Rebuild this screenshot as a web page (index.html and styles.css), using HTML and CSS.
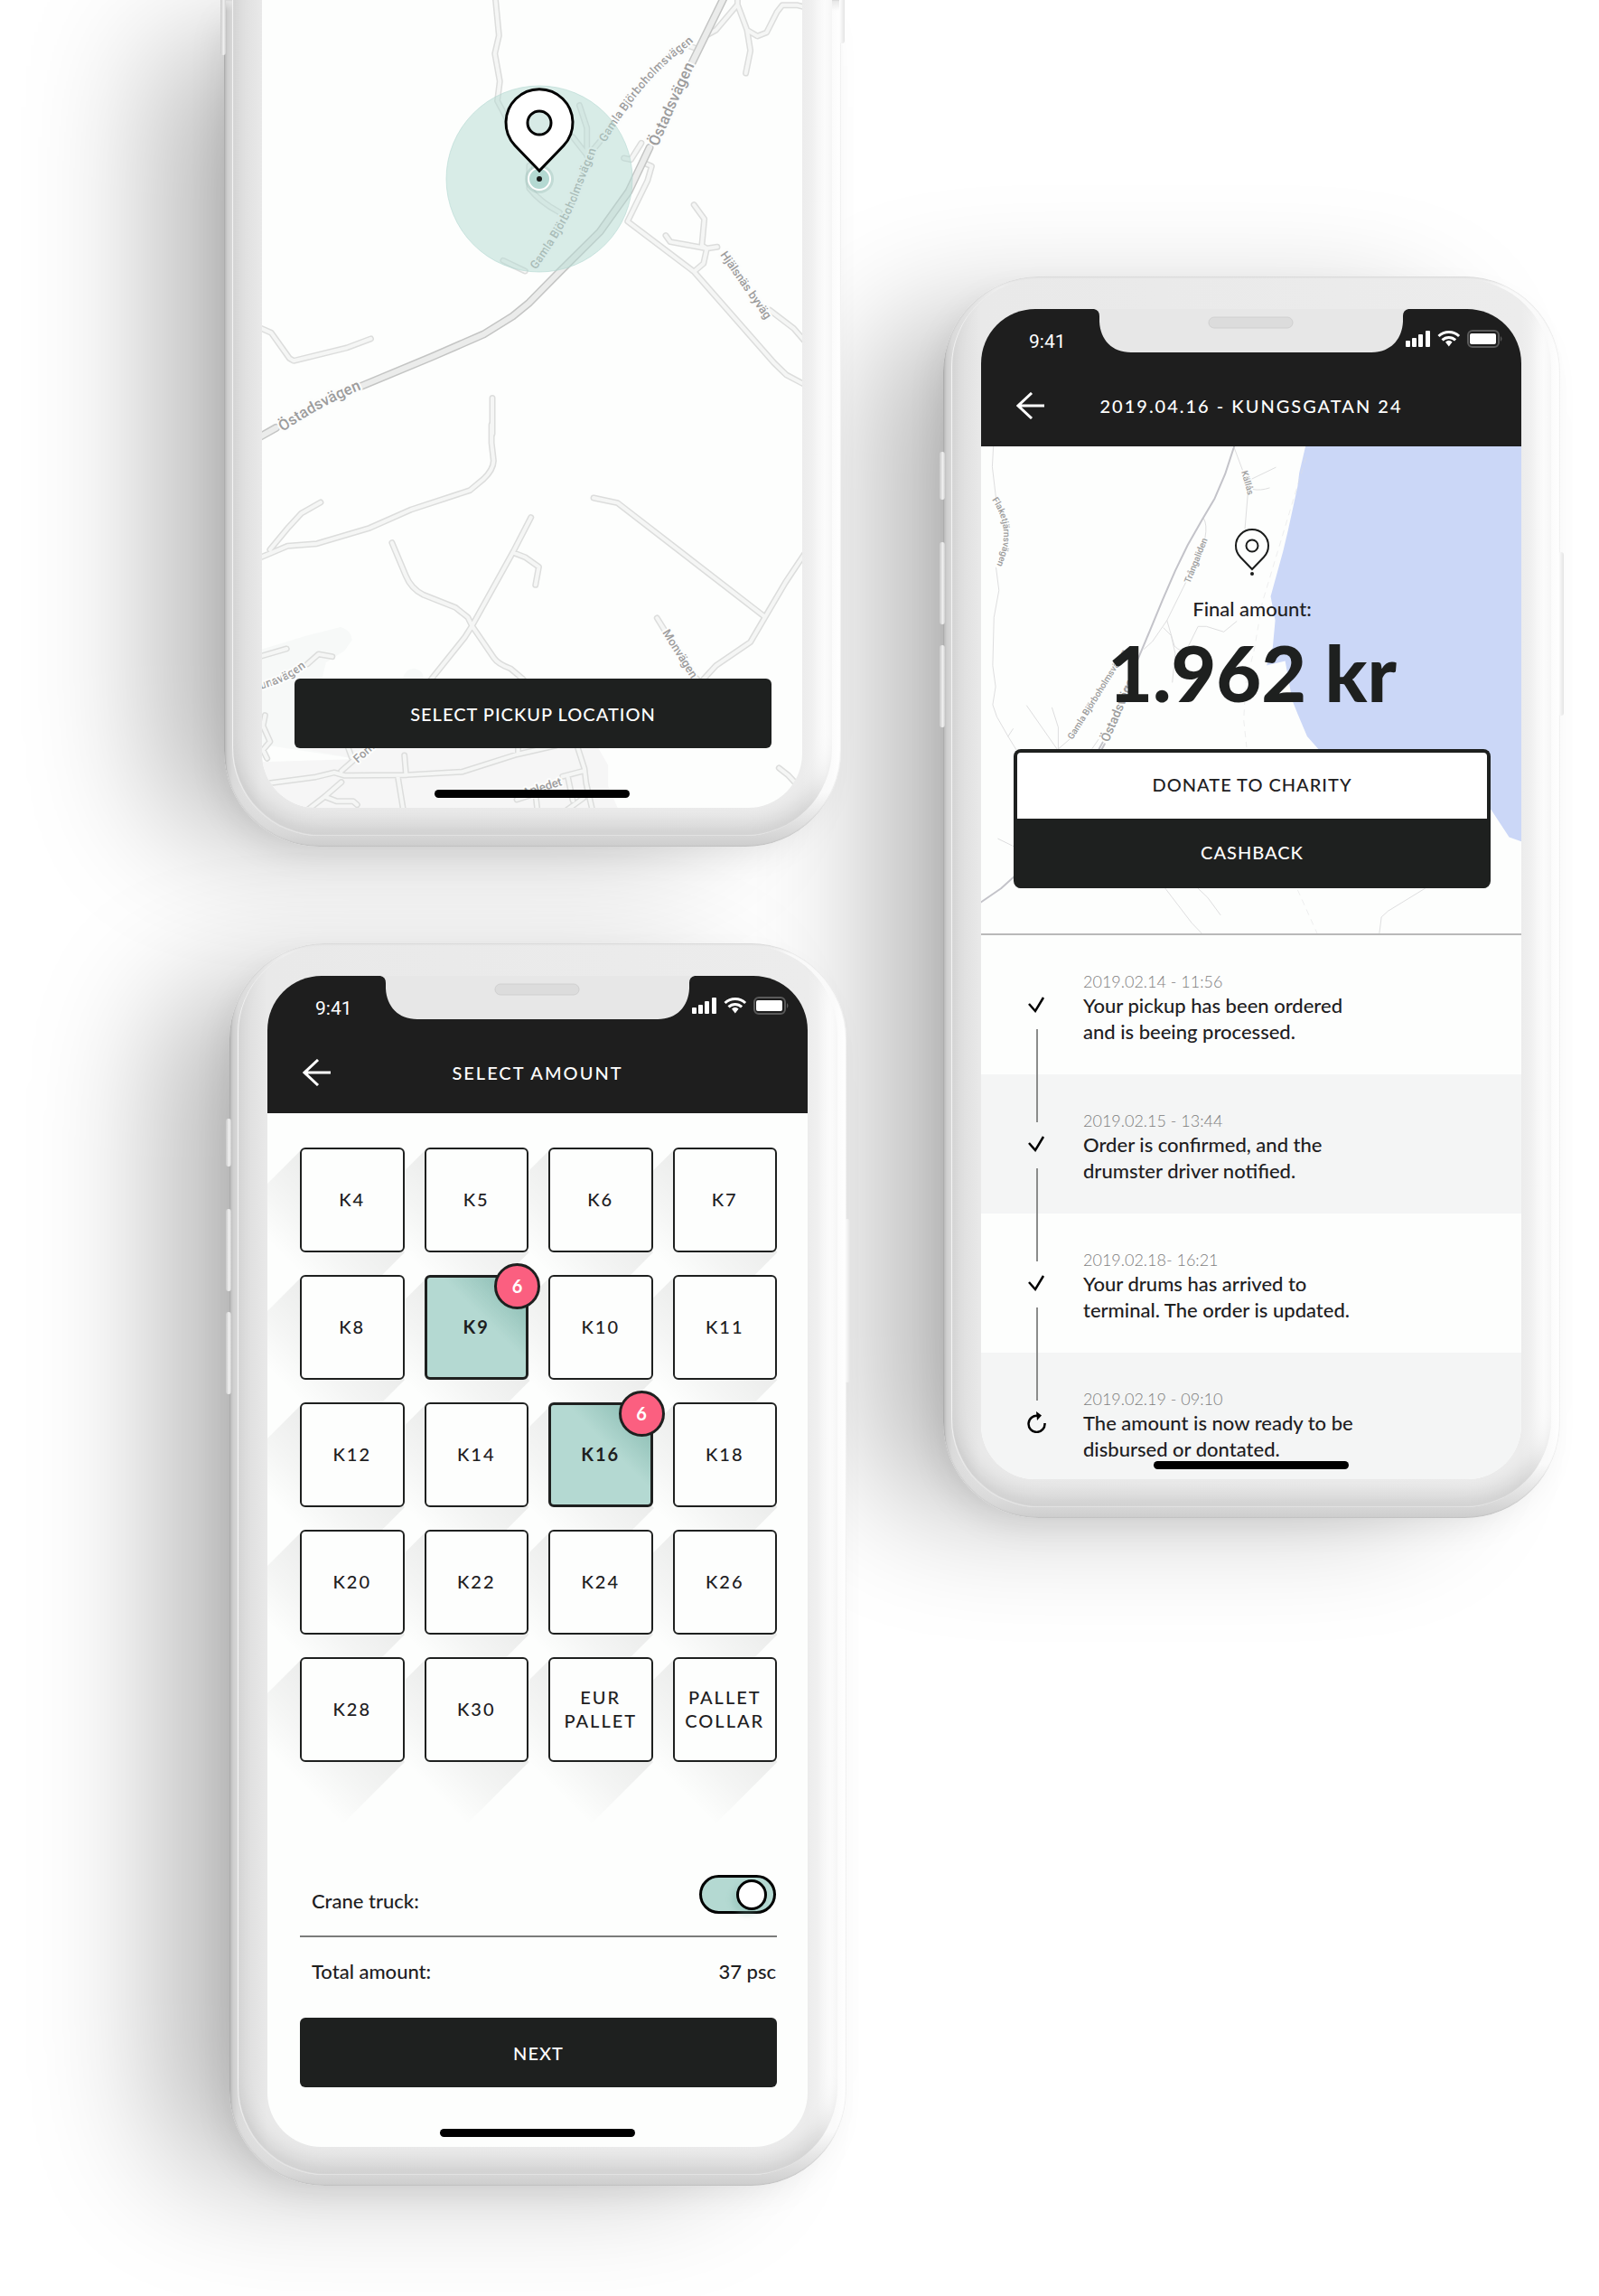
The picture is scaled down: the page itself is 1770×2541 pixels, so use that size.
FILE: index.html
```html
<!DOCTYPE html>
<html lang="en">
<head>
<meta charset="utf-8">
<meta name="viewport" content="width=device-width, initial-scale=1">
<title>Drumster pickup app</title>
<link rel="stylesheet" href="styles.css">
</head>
<body>
<svg class="sprite" aria-hidden="true">
  <symbol id="notch" viewBox="0 0 348 48">
    <path d="M0 0Q6 1 6 8V14C7 34 20 48 41 48H307C328 48 341 34 342 14V8Q342 1 348 0Z" fill="#e7e7e7"/>
    <rect x="127" y="9" width="93" height="12" rx="6" fill="#dcdcdc" stroke="#d0d0d0"/>
  </symbol>
  <symbol id="status" viewBox="0 0 108 20">
    <g fill="#fff">
      <rect x="0" y="12" width="5" height="7" rx="1"/>
      <rect x="7" y="9" width="5" height="10" rx="1"/>
      <rect x="14" y="5" width="5" height="14" rx="1"/>
      <rect x="22" y="1" width="5" height="18" rx="1"/>
      <path d="M44 13.400a6 6 0 0 1 7.600 0L47.800 18.500Z"/>
      <rect x="71" y="4" width="29" height="12" rx="2"/>
    </g>
    <g fill="none" stroke="#fff" stroke-width="3">
      <path d="M36.500 7a16.500 16.500 0 0 1 22.600 0"/>
      <path d="M40.500 11.400a10.500 10.500 0 0 1 14.600 0"/>
    </g>
    <rect x="69" y="1" width="34" height="18" rx="5" fill="none" stroke="#5a5a5a" stroke-width="2"/>
    <path d="M105 7q3 3 0 6z" fill="#5a5a5a"/>
  </symbol>
  <symbol id="back" viewBox="0 0 32 30">
    <path d="M31 15H2M17 1L2 15l15 14" fill="none" stroke="#fff" stroke-width="3"/>
  </symbol>
  <symbol id="check" viewBox="0 0 20 20">
    <path d="M2 9l7 8L18 2" fill="none" stroke="#000" stroke-width="2.500"/>
  </symbol>
</svg>

<main class="board">
  <div class="column">
    <section class="phone phone--cut" aria-label="Pickup location">
      <i class="side side--volume"></i><i class="side side--power"></i>
      <div class="bezel">
        <div class="screen screen--map">
          <svg class="map" viewBox="0 0 598 894" preserveAspectRatio="xMidYMid slice" aria-hidden="true">
            <defs>
              <g id="minor-top" transform="translate(-60 0) scale(.4592 .3333)">
                <path d="M693 -10L702 118L692 178L704 270L698 335L735 430M896 350L914 425V515L880 455M945 470L915 520M775 550V625Q800 670 848 705M712 865L765 900M1045 475L1020 530L1003 525M1050 540L1070 552L1060 600L1012 735L1172 902L1365 1205L1395 1245L1450 1285M1172 902L1195 875L1203 825L1228 820M1172 680L1197 727L1191 815L1203 825L1115 803L1104 782M1355 1030L1412 1090L1450 1150M1205 115L1225 100L1277 15L1300 100L1308 168L1297 243M1277 -10V15M1300 100L1325 120L1347 108L1372 40L1385 17H1420L1450 28M120 1085L153 1105L197 1190L207 1198L335 1155L393 1125M686 1322V1440M1155 150L1180 162"/>
              </g>
              <g id="minor-bottom" transform="translate(-60 470) scale(.4592 .3333)">
                <path d="M684 0V60L689 120Q688 150 665 180L632 218L490 282L390 343L263 395L192 403L120 445M272 258L225 295L195 340L150 415M444 392L477 500Q490 545 520 565L597 607L627 640L637 668L690 775Q700 795 730 810L760 845M779 308L737 420L637 668L620 705L530 860M737 425L765 440L798 472L790 532M930 243L988 260L1340 635M1450 405L1392 525L1345 635L1308 722L1225 800L1195 845M1083 642L1100 680M1172 835L1180 845M120 772L190 744M240 795L267 762L300 770M138 965L133 1000L150 1052L133 1080L143 1108M140 1192L260 1170L305 1155L330 1165L480 1163L612 1153L745 1095L840 1065M322 1150L355 1110M335 1060L347 1105M474 1098L478 1163M458 1168L472 1285M748 1070V1092M890 1065L908 1142L912 1190L928 1285M905 1150L855 1168M868 1170L880 1248M322 1187L282 1235L235 1285M282 1235L310 1250H350L360 1262M745 1245L790 1225L795 1285M860 1285L905 1240M1377 1140L1400 1165L1430 1210"/>
              </g>
              <g id="major" transform="translate(-60 0) scale(.4592 .3333)">
                <path d="M1245 -10L1165 215M1065 490L1015 635L945 770L850 900L775 1005L735 1050L665 1110L540 1185L365 1285M165 1420L120 1455"/>
              </g>
              <path id="gamla-a" d="M380 158Q424 84 471 52L486 38"/>
              <path id="gamla-b" d="M303 299Q338 250 350 217T368 172L374 152"/>
              <path id="ostad-a" d="M438 163Q461 110 478 74L486 54"/>
              <path id="ostad-b" d="M23 478Q63 450 112 430L124 424"/>
              <path id="kuna" d="M-8 764Q26 758 54 734L64 724"/>
            </defs>
            <g transform="translate(-60 470) scale(.4592 .3333)">
              <path d="M120 750L240 700L320 672Q345 680 348 715L330 750L285 790L275 845L470 845Q475 812 495 810Q520 812 520 845V1080L360 1110L120 1060Z" fill="#f7f9f8"/>
              <path d="M210 1070H940L965 1130V1200L992 1285H120V1120L360 1110Z" fill="#f6f6f6"/>
            </g>
            <g class="road road--edge"><use href="#minor-top"/><use href="#minor-bottom"/></g>
            <g class="road road--fill"><use href="#minor-top"/><use href="#minor-bottom"/></g>
            <use class="road road--main-edge" href="#major"/>
            <use class="road road--main-fill" href="#major"/>
            <g class="place place--halo">
              <text><textPath href="#gamla-a">Gamla Björboholmsvägen</textPath></text>
              <text><textPath href="#gamla-b">Gamla Björboholmsvägen</textPath></text>
              <text class="place--big"><textPath href="#ostad-a">Östadsvägen</textPath></text>
              <text class="place--big"><textPath href="#ostad-b">Östadsvägen</textPath></text>
              <text transform="translate(507 282) rotate(55)">Hjälsnäs byväg</text>
              <text transform="translate(443 700) rotate(58)">Monvägen</text>
              <text><textPath href="#kuna">kunavägen</textPath></text>
              <text transform="translate(106 845) rotate(-42)">Forn</text>
              <text transform="translate(290 882) rotate(-17)">Apledet</text>
            </g>
            <circle cx="307" cy="198" r="103" fill="#b4d9d2" fill-opacity=".5" stroke="#b4d9d2" stroke-opacity=".6"/>
            <circle cx="307" cy="198" r="16" fill="#8fb3ac" fill-opacity=".3"/>
            <circle cx="307" cy="198" r="12" fill="#b4d9d2" stroke="#fff" stroke-width="2"/>
            <circle cx="307" cy="198" r="3" fill="#1a1c1b"/>
            <path d="M307 189L280 161A37 37 0 1 1 334 161Z" fill="#fff" stroke="#000" stroke-width="3"/>
            <circle cx="307" cy="136" r="13" fill="#d7eae6" stroke="#000" stroke-width="3"/>
          </svg>
          <button class="button" type="button">SELECT PICKUP LOCATION</button>
          <span class="home-bar"></span>
        </div>
      </div>
    </section>

    <section class="phone phone--end" aria-label="Select amount">
      <i class="side side--mute"></i><i class="side side--up"></i><i class="side side--down"></i><i class="side side--lock"></i>
      <div class="bezel">
        <div class="screen">
          <header class="top">
            <svg class="notch" aria-hidden="true"><use href="#notch"/></svg>
            <div class="status"><span>9:41</span><svg class="status-icons" aria-hidden="true"><use href="#status"/></svg></div>
            <div class="nav">
              <button class="back" type="button" aria-label="Back"><svg aria-hidden="true"><use href="#back"/></svg></button>
              <h1>SELECT AMOUNT</h1>
            </div>
          </header>
          <div class="order">
            <div class="sizes">
              <button type="button">K4</button>
              <button type="button">K5</button>
              <button type="button">K6</button>
              <button type="button">K7</button>
              <button type="button">K8</button>
              <button type="button" class="chosen">K9<span class="badge">6</span></button>
              <button type="button">K10</button>
              <button type="button">K11</button>
              <button type="button">K12</button>
              <button type="button">K14</button>
              <button type="button" class="chosen">K16<span class="badge">6</span></button>
              <button type="button">K18</button>
              <button type="button">K20</button>
              <button type="button">K22</button>
              <button type="button">K24</button>
              <button type="button">K26</button>
              <button type="button">K28</button>
              <button type="button">K30</button>
              <button type="button">EUR<br>PALLET</button>
              <button type="button">PALLET<br>COLLAR</button>
            </div>
            <div class="line line--crane">
              <label for="crane">Crane truck:</label>
              <input class="toggle" id="crane" type="checkbox" role="switch" checked>
            </div>
            <div class="line line--total"><span>Total amount:</span><span>37 psc</span></div>
            <button class="button" type="button">NEXT</button>
          </div>
          <span class="home-bar"></span>
        </div>
      </div>
    </section>
  </div>

  <div class="column column--low">
    <section class="phone" aria-label="Order status">
      <i class="side side--mute"></i><i class="side side--up"></i><i class="side side--down"></i><i class="side side--lock"></i>
      <div class="bezel">
        <div class="screen">
          <header class="top">
            <svg class="notch" aria-hidden="true"><use href="#notch"/></svg>
            <div class="status"><span>9:41</span><svg class="status-icons" aria-hidden="true"><use href="#status"/></svg></div>
            <div class="nav">
              <button class="back" type="button" aria-label="Back"><svg aria-hidden="true"><use href="#back"/></svg></button>
              <h1>2019.04.16 - KUNGSGATAN 24</h1>
            </div>
          </header>
          <div class="payout">
            <svg class="map" viewBox="0 0 598 540" preserveAspectRatio="xMidYMin slice" aria-hidden="true">
              <defs>
                <path id="flake" d="M12 59Q37 95 14 138L8 150"/>
              </defs>
              <g transform="translate(-56 -204) scale(.4592 .3333)" fill="none">
                <path d="M906 600L889 700L885 745L862 890L850 960L838 1020L820 1110L831 1190L825 1280L810 1340L855 1325L872 1455L885 1500L908 1575L935 1617L1100 1700L1352 1820L1395 1910L1440 1932V600Z" fill="#cbd7f7"/>
                <g class="track">
                  <path d="M152 600L149 680L158 785M158 1015L165 1090L153 1180L150 1340L157 1410L150 1470L160 1510L187 1575L207 1620M187 1575L199 1550M232 1473L305 1617M293 1480L308 1545V1617L335 1585M733 620L752 690M765 770L758 885M775 720L832 682M778 755Q795 760 817 750M658 850Q668 870 662 915M615 1065L570 1190L535 1260L515 1285M562 1215L580 1240L590 1300L583 1395M570 1190L588 1275Q605 1300 620 1280L645 1210H665L707 1228L738 1193M163 1915L200 1940M565 2078L630 2195L660 2238M645 2080L668 2110L699 2168M1192 2080L1103 2155L1087 2175L1081 2240M390 1615L405 1585"/>
                  <path d="M905 650L800 1130L780 1290L760 1400L755 1520L762 1610M885 2085L935 2238" stroke-dasharray="6 6" stroke-opacity=".5"/>
                </g>
                <path class="track track--main" d="M735 600L710 705L685 785L655 855L620 940L590 1025L560 1120L518 1260L495 1335L470 1420M202 2040L170 2080L115 2132"/>
                <path class="track track--main" d="M405 1620L415 1595M412 1620L420 1600"/>
              </g>
              <g class="place place--small">
                <text transform="translate(288 28) rotate(74)">Källås</text>
                <text transform="translate(231 152) rotate(-68)">Trångaliden</text>
                <text><textPath href="#flake">Flaketjärnsvägen</textPath></text>
                <text transform="translate(101 325) rotate(-58)">Gamla Björboholmsvägen</text>
                <text class="place--medium" transform="translate(141 328) rotate(-67)">Östadsvägen</text>
              </g>
            </svg>
            <svg class="pin" viewBox="0 0 42 54" aria-hidden="true">
              <g fill="none" stroke="#1a1c1b" stroke-width="2">
                <path d="M21 46L8 32.500A18 18 0 1 1 34 32.500Z"/>
                <circle cx="21" cy="20" r="6.500"/>
              </g>
              <circle cx="21" cy="51" r="2" fill="#1a1c1b"/>
            </svg>
            <p class="payout-label">Final amount:</p>
            <p class="payout-sum">1.962 kr</p>
            <div class="choice">
              <button type="button">DONATE TO CHARITY</button>
              <button type="button" class="choice-main">CASHBACK</button>
            </div>
          </div>
          <ol class="steps">
            <li>
              <svg class="mark" aria-hidden="true"><use href="#check"/></svg>
              <div><time>2019.02.14 - 11:56</time><p>Your pickup has been ordered<br>and is beeing processed.</p></div>
            </li>
            <li>
              <svg class="mark" aria-hidden="true"><use href="#check"/></svg>
              <div><time>2019.02.15 - 13:44</time><p>Order is confirmed, and the<br>drumster driver notified.</p></div>
            </li>
            <li>
              <svg class="mark" aria-hidden="true"><use href="#check"/></svg>
              <div><time>2019.02.18- 16:21</time><p>Your drums has arrived to<br>terminal. The order is updated.</p></div>
            </li>
            <li>
              <svg class="mark mark--wait" viewBox="0 0 22 24" aria-hidden="true">
                <path d="M12 5A9 9 0 1 0 19.500 13" fill="none" stroke="#000" stroke-width="2.500"/>
                <path d="M10 0L16 4.500L11 10Z" fill="#000"/>
              </svg>
              <div><time>2019.02.19 - 09:10</time><p>The amount is now ready to be<br>disbursed or dontated.</p></div>
            </li>
          </ol>
          <span class="home-bar"></span>
        </div>
      </div>
    </section>
  </div>
</main>
</body>
</html>
```
FILE: styles.css
```css
* { box-sizing: border-box; }

body {
  margin: 0;
  background: #fff;
  color: #1e201f;
  font: 500 22px/28px Lato, "Open Sans", sans-serif;
  overflow-x: hidden;
}

h1, p, ol { margin: 0; padding: 0; font: inherit; }
button { font: inherit; font-size: 20px; color: inherit; cursor: pointer; }
.sprite { display: none; }

.board {
  display: grid;
  grid-template-columns: 689fr 683fr;
  column-gap: 107px;
  align-items: start;
  padding: 0 43px 122px 248px;
}

.column {
  display: flex;
  flex-direction: column;
  gap: 107px;
  position: relative;
  z-index: 1;
}
.column--low { padding-top: 306px; z-index: 0; }

/* Phone shell */
.phone {
  position: relative;
  width: 683px;
  max-width: 100%;
  padding: 3px 10px 12px 9px;
  border-radius: 106px;
  background:
    linear-gradient(180deg, #e6e6e6 0, #fff0 12px),
    linear-gradient(0deg, #cdcdcd 0, #d6d6d6 12px, #d6d6d600 60px),
    linear-gradient(90deg, #b4b4b4 0, #cecece 4px, #dadada 10px, #ededed 60px, #fafafa 98%, #fff);
  box-shadow:
    inset 0 0 2px #0003,
    -10px 14px 40px -10px #00000018,
    -106px 18px 145px -32px #00000048;
}
.phone--end { align-self: flex-end; }
.phone--cut { padding-top: 0; border-radius: 0 0 106px 106px; }

.bezel {
  padding: 33px 33px 31px;
  border-radius: 97px;
  background: linear-gradient(90deg, #dadada 0, #e9e9e9 33px, #ececec calc(100% - 33px), #f0f0f0 calc(100% - 22px), #fefefe calc(100% - 8px), #fff);
  box-shadow: inset 0 -18px 22px -6px #00000020, inset 1px -1px 1px #fff;
}
.phone--cut .bezel { padding-top: 0; border-radius: 0 0 97px 97px; }

.side {
  position: absolute;
  width: 6px;
  border-radius: 3px;
  left: -4px;
  background: linear-gradient(90deg, #c9c9c9, #f0f0f0 60%, #d0d0d0);
}
.side--volume { top: 0; height: 61px; border-radius: 0 0 3px 3px; }
.side--mute { top: 194px; height: 53px; }
.side--up { top: 294px; height: 91px; }
.side--down { top: 408px; height: 91px; }
.side--lock, .side--power {
  left: auto;
  right: -4px;
  background: linear-gradient(90deg, #fff, #e4e4e4);
}
.side--lock { top: 305px; height: 181px; }
.side--power { top: 0; height: 48px; border-radius: 0 0 3px 3px; }

.screen {
  position: relative;
  overflow: hidden;
  border-radius: 60px;
  background: #fdfefd;
}
.screen--map {
  display: flex;
  flex-direction: column;
  justify-content: flex-end;
  aspect-ratio: 598 / 894;
  padding: 0 34px 66px 36px;
  border-radius: 0 0 60px 60px;
}

.home-bar {
  position: absolute;
  left: 50%;
  bottom: 11px;
  width: 216px;
  height: 9px;
  margin-left: -108px;
  border-radius: 5px;
  background: #000;
}

/* Status bar and title */
.top { position: relative; background: #1e1e1e; color: #fff; }
.notch {
  position: absolute;
  top: 0;
  left: 50%;
  width: 348px;
  height: 48px;
  margin-left: -174px;
}
.status {
  display: flex;
  justify-content: space-between;
  align-items: center;
  height: 72px;
  padding: 0 20px 0 53px;
  font: 400 21px/28px Roboto, sans-serif;
}
.status-icons { width: 108px; height: 20px; margin-bottom: 6px; }
.nav {
  display: grid;
  grid-template-columns: 32px 1fr 32px;
  align-items: center;
  height: 80px;
  padding: 0 39px 10px;
}
.back { display: block; padding: 0; border: 0; background: none; }
.back svg { display: block; width: 32px; height: 30px; }
.nav h1 { text-align: center; font-size: 20px; letter-spacing: 2px; }

/* Shared button */
.button {
  position: relative;
  height: 77px;
  width: 100%;
  border: 0;
  border-radius: 6px;
  background: #1e201f;
  color: #fff;
  letter-spacing: 1px;
}

/* Maps */
.map { position: absolute; inset: 0; width: 100%; height: 100%; }
.road, .track { fill: none; stroke-linecap: round; stroke-linejoin: round; }
.road path { vector-effect: non-scaling-stroke; }
.track path, .track--main { vector-effect: non-scaling-stroke; }
.road--edge { stroke: #dcdddc; stroke-width: 7px; }
.road--fill { stroke: #f5f6f5; stroke-width: 4px; }
.road--main-edge { stroke: #c4c5c4; stroke-width: 9px; }
.road--main-fill { stroke: #ebeceb; stroke-width: 6px; }
.track { stroke: #dededf; stroke-width: 1px; }
.track--main { stroke: #c3c3c9; stroke-width: 2px; }
#major path, #minor-top path, #minor-bottom path { vector-effect: non-scaling-stroke; }
.place { fill: #9c9c9c; font: 500 13px Roboto, sans-serif; }
.place--halo { stroke: #fcfdfc; stroke-width: 4px; paint-order: stroke; stroke-linejoin: round; }
.place--big { font-size: 17px; }
.place--small { font-size: 10px; }
.place--medium { font-size: 14px; }

/* Amount picker */
.order { padding: 38px 34px 66px 36px; }
.sizes {
  display: grid;
  grid-template-columns: repeat(4, 1fr);
  grid-auto-rows: 116px;
  gap: 25px 22px;
  isolation: isolate;
}
.sizes button {
  position: relative;
  padding: 0 0 3px;
  border: 2px solid #1e201f;
  border-radius: 6px;
  background: #fdfefd;
  line-height: 26px;
  letter-spacing: 2px;
}
.sizes button::before {
  content: "";
  position: absolute;
  z-index: -1;
  top: 0;
  left: -78px;
  width: 192px;
  height: 192px;
  clip-path: polygon(78px 0, 192px 114px, 114px 192px, 0 78px);
  background: linear-gradient(225deg, #00000012 30%, #00000009 50%, #0000 66%);
}
.sizes .chosen {
  border-width: 3px;
  background:
    linear-gradient(225deg, #97c5bc 18%, #b4d9d200 42%),
    #b4d9d2;
  font-weight: 700;
}
.badge {
  position: absolute;
  top: -16px;
  right: -16px;
  width: 51px;
  height: 51px;
  border: 3px solid #1e201f;
  border-radius: 50%;
  background: #fb5f80;
  color: #fff;
  line-height: 45px;
  letter-spacing: 0;
}

.line { display: flex; justify-content: space-between; align-items: flex-end; padding: 0 1px 0 13px; }
.line--crane { margin-top: 125px; padding-bottom: 24px; border-bottom: 2px solid #7b7c7b; }
.line--total { padding-top: 24px; margin-bottom: 37px; }
.toggle {
  appearance: none;
  display: flex;
  justify-content: flex-end;
  align-items: center;
  width: 85px;
  height: 43px;
  margin: 0;
  padding-right: 7px;
  border: 3px solid #000;
  border-radius: 22px;
  background: #b4d9d2;
  cursor: pointer;
}
.toggle::before {
  content: "";
  width: 28px;
  height: 28px;
  border: 3px solid #000;
  border-radius: 50%;
  background: #fff;
  box-shadow: -5px 5px 6px #7fb3a955;
}
.toggle:not(:checked) { justify-content: flex-start; padding: 0 0 0 7px; }

/* Order status */
.payout {
  position: relative;
  display: flex;
  flex-direction: column;
  align-items: center;
  padding: 90px 34px 50px 36px;
  border-bottom: 2px solid #b9b9b9;
}
.payout > :not(.map) { position: relative; }
.pin { width: 42px; height: 54px; }
.payout-label { margin-top: 22px; }
.payout-sum { margin: 7px 0 36px; font-weight: 900; font-size: 86px; line-height: 98px; }
.choice {
  display: grid;
  grid-template-rows: 73px 77px;
  width: 100%;
  overflow: hidden;
  border: 4px solid #1e201f;
  border-bottom-width: 0;
  border-radius: 8px;
  background: #1e201f;
}
.choice button { padding-bottom: 4px; border: 0; background: #fff; letter-spacing: 1px; }
.choice .choice-main { background: #1e201f; color: #fff; }

.steps { list-style: none; }
.steps li {
  position: relative;
  display: grid;
  grid-template-columns: 20px 1fr;
  column-gap: 42px;
  padding: 39px 34px 33px 51px;
}
.steps li:nth-child(even) { background: #f4f5f5; }
.steps li:last-child { padding-bottom: 19px; }
.steps li:not(:last-child)::after {
  content: "";
  position: absolute;
  z-index: 1;
  left: 61px;
  top: 104px;
  width: 2px;
  height: 103px;
  background: #8b8c8b;
}
.mark { width: 20px; height: 20px; margin-top: 28px; }
.mark--wait { width: 22px; height: 24px; margin-top: 26px; }
.steps time { display: block; font-weight: 300; font-size: 18px; line-height: 24px; color: #7d7d7d; }
.steps p { line-height: 29px; }
```
